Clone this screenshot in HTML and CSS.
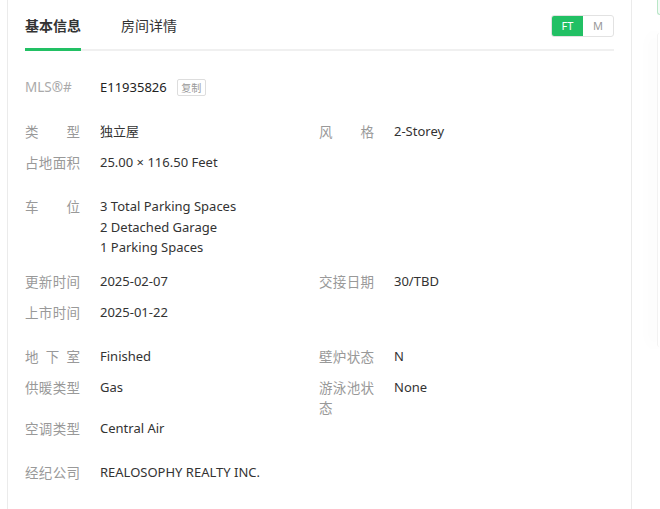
FILE: index.html
```html
<!DOCTYPE html>
<html lang="zh">
<head>
<meta charset="utf-8">
<title>房源信息</title>
<link rel="stylesheet" href="styles.css">
</head>
<body>
<div class="page">
  <div class="card">
    <div class="tabs">
      <div class="tab active">基本信息</div>
      <div class="tab">房间详情</div>
      <div class="unit">
        <span class="unit-opt on">FT</span>
        <span class="unit-opt">M</span>
      </div>
    </div>
    <div class="content">
      <div class="section">
        <div class="row">
          <div class="item"><span class="label mls-label">MLS®#</span><span class="value mls">E11935826<span class="copy">复制</span></span></div>
        </div>
      </div>
      <div class="section">
        <div class="row">
          <div class="item"><span class="label j">类型</span><span class="value">独立屋</span></div>
          <div class="item"><span class="label j">风格</span><span class="value">2-Storey</span></div>
        </div>
        <div class="row">
          <div class="item"><span class="label j">占地面积</span><span class="value">25.00 × 116.50 Feet</span></div>
        </div>
      </div>
      <div class="section">
        <div class="row">
          <div class="item"><span class="label j">车位</span><span class="value">3 Total Parking Spaces<br>2 Detached Garage<br>1 Parking Spaces</span></div>
        </div>
      </div>
      <div class="section">
        <div class="row">
          <div class="item"><span class="label j">更新时间</span><span class="value">2025-02-07</span></div>
          <div class="item"><span class="label j">交接日期</span><span class="value">30/TBD</span></div>
        </div>
        <div class="row">
          <div class="item"><span class="label j">上市时间</span><span class="value">2025-01-22</span></div>
        </div>
      </div>
      <div class="section">
        <div class="row">
          <div class="item"><span class="label j">地下室</span><span class="value">Finished</span></div>
          <div class="item"><span class="label j">壁炉状态</span><span class="value">N</span></div>
        </div>
        <div class="row">
          <div class="item"><span class="label j">供暖类型</span><span class="value">Gas</span></div>
          <div class="item"><span class="label j">游泳池状态</span><span class="value">None</span></div>
        </div>
        <div class="row">
          <div class="item"><span class="label j">空调类型</span><span class="value">Central Air</span></div>
        </div>
      </div>
      <div class="section">
        <div class="row">
          <div class="item"><span class="label j">经纪公司</span><span class="value">REALOSOPHY REALTY INC.</span></div>
        </div>
      </div>
    </div>
  </div>
  <div class="side">
    <div class="side-top"></div>
    <div class="side-panel"></div>
  </div>
</div>
</body>
</html>
```

FILE: styles.css
```css
* { box-sizing: border-box; }
html, body { margin: 0; padding: 0; background: #fff; }
body {
  font-family: "Noto Sans", "Noto Sans CJK SC", sans-serif;
  font-size: 14px;
  color: #333;
  overflow: hidden;
}
.page {
  display: flex;
  align-items: flex-start;
  height: 509px;
  width: 660px;
  overflow: hidden;
}
.card {
  flex: none;
  margin-left: 7px;
  width: 625px;
  height: 509px;
  border-left: 1px solid #ebebeb;
  border-right: 1px solid #ebebeb;
  padding: 0 17px;
}
.tabs {
  display: flex;
  align-items: flex-start;
  height: 51px;
  border-bottom: 2px solid #f0f0f0;
}
.tab {
  height: 51px;
  padding-top: 13.5px;
  margin-right: 40px;
  line-height: 22px;
  color: #333;
  font-family: "Noto Sans CJK SC", sans-serif;
  font-size: 14px;
}
.tab.active {
  font-weight: bold;
  border-bottom: 3px solid #22c064;
  margin-bottom: -2px;
}
.unit {
  margin-left: auto;
  margin-top: 15px;
  display: flex;
  height: 22px;
  border: 1px solid #e2e2e2;
  border-radius: 3px;
  overflow: hidden;
  font-size: 11px;
}
.unit-opt {
  width: 30px;
  line-height: 20px;
  text-align: center;
  color: #999;
}
.unit-opt.on {
  width: 31px;
  background: #22c064;
  color: #fff;
}
.content {
  padding-top: 26px;
}
.section {
  margin-bottom: 13px;
}
.row {
  display: grid;
  grid-template-columns: 294px 1fr;
  min-height: 31px;
  line-height: 20.5px;
}
.item {
  display: flex;
  align-items: flex-start;
}
.label {
  width: 55px;
  flex: none;
  margin-right: 20px;
  color: #999;
  font-family: "Noto Sans CJK SC", sans-serif;
  font-size: 13.5px;
}
.label.mls-label {
  font-family: "Noto Sans", sans-serif;
  font-size: 13.5px;
  color: #aaa;
}
.label.j {
  text-align: justify;
  text-align-last: justify;
}
.value {
  color: #333;
  font-family: "Noto Sans", "Noto Sans CJK SC", sans-serif;
  font-size: 13px;
}
.mls {
  display: flex;
  align-items: center;
  color: #222;
}
.copy {
  margin-left: 10px;
  width: 29px;
  height: 17px;
  border: 1px solid #ddd;
  border-radius: 2px;
  font-family: "Noto Sans CJK SC", sans-serif;
  font-size: 10px;
  line-height: 15px;
  text-align: center;
  color: #999;
}
.side {
  flex: none;
  width: 3px;
  margin-left: 25px;
}
.side-top {
  height: 15px;
  border-left: 1px solid #b9e6c7;
  border-bottom: 1px solid #b9e6c7;
  border-radius: 0 0 0 4px;
  background: #f3fbf6;
}
.side-panel {
  margin-top: 18px;
  height: 314px;
  background: #fff;
  border-left: 1px solid #f2f2f2;
  border-radius: 4px 0 0 4px;
  box-shadow: -4px 0 16px rgba(0, 0, 0, 0.07);
}
```
